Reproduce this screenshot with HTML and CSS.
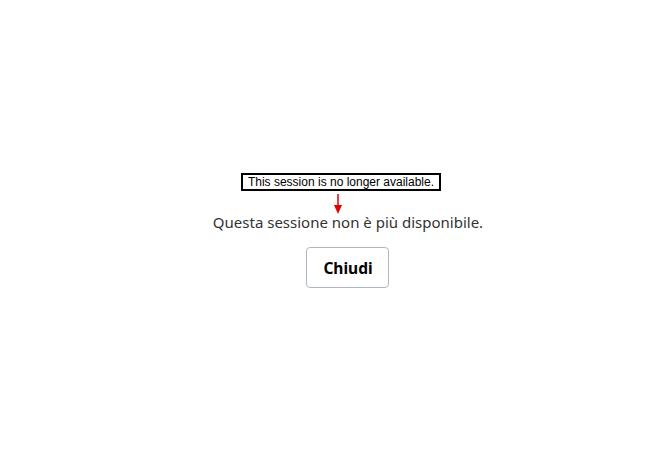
FILE: index.html
```html
<!DOCTYPE html>
<html lang="it">

<head>
    <meta charset="UTF-8">
    <meta name="viewport" content="width=device-width, initial-scale=1.0">
    <title>Sessione</title>
    <link rel="stylesheet" href="styles.css">
</head>

<body>
    <div class="page">
        <div class="message">
            <p class="text">Questa sessione non è più disponibile.</p>
            <button class="close-btn">Chiudi</button>
        </div>
    </div>

    <!-- nota di traduzione -->
    <div class="note">This session is no longer available.</div>
    <svg class="arrow" width="12" height="22" viewBox="0 0 12 22">
        <line x1="6" y1="0" x2="6" y2="13" stroke="#e00000" stroke-width="1.5" />
        <polygon points="2,11 10,11 6,20" fill="#e00000" />
    </svg>
</body>

</html>
```

FILE: styles.css
```css
html,
body {
    margin: 0;
    height: 100%;
    background-color: #fff;
}

.page {
    height: 100%;
    padding-left: 38px;
    box-sizing: border-box;
    display: flex;
    align-items: flex-start;
    justify-content: center;
}

.message {
    margin-top: 211px;
    display: flex;
    flex-direction: column;
    align-items: center;
}

.text {
    margin: 0;
    font-family: "Noto Sans", sans-serif;
    font-size: 15px;
    line-height: 22px;
    color: #333;
}

.close-btn {
    margin-top: 14px;
    width: 83px;
    height: 41px;
    border: 1px solid #aeb8c4;
    border-radius: 4px;
    background-color: #fff;
    font-family: "Noto Sans", sans-serif;
    font-size: 15.5px;
    font-weight: bold;
    color: #000;
}

.note {
    position: absolute;
    left: 241px;
    top: 173px;
    width: 196px;
    height: 14px;
    border: 2px solid #000;
    background-color: #fff;
    font-family: "Liberation Sans", Arial, sans-serif;
    font-size: 12px;
    line-height: 14px;
    text-align: center;
    color: #000;
}

.arrow {
    position: absolute;
    left: 332px;
    top: 194px;
}
```
